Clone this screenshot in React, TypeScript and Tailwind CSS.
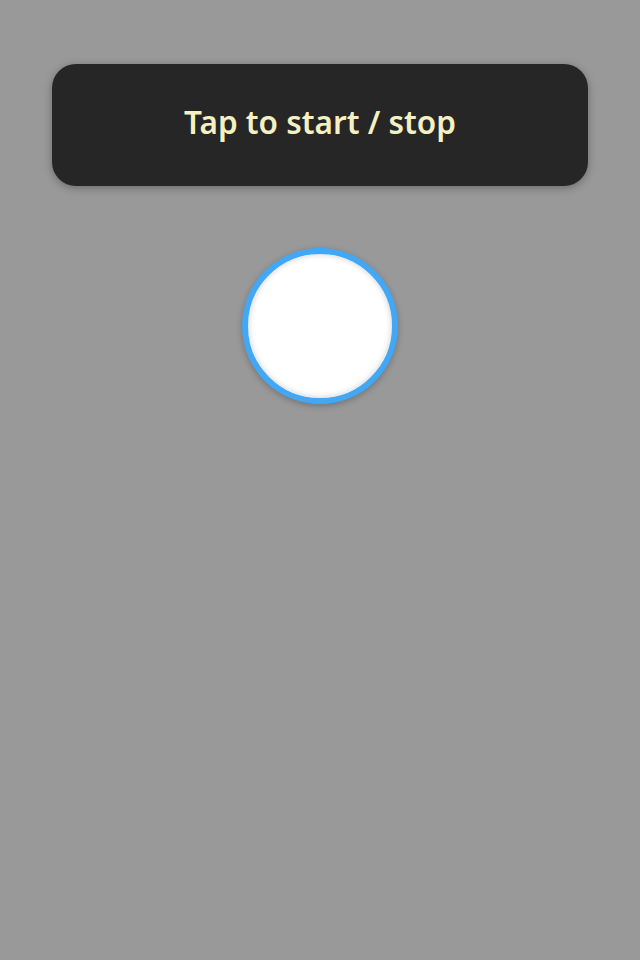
export default function App() {
  return (
    <div className="min-h-screen w-full bg-[#999999] flex flex-col items-center pt-16" style={{ fontFamily: '"Noto Sans", "Open Sans", sans-serif' }}>
      <div className="w-[536px] h-[122px] rounded-[24px] bg-[#262626] flex items-center justify-center pb-[6px] shadow-[0_2px_8px_rgba(0,0,0,0.3)]">
        <span className="text-[31.5px] font-semibold text-[#f5f0c2] leading-none">Tap to start / stop</span>
      </div>
      <div className="mt-[62px] w-[156px] h-[156px] rounded-full bg-white border-[6px] border-[#42a8f5] shadow-[inset_0_0_6px_rgba(0,0,0,0.2),0_2px_6px_rgba(0,0,0,0.25)]" />
    </div>
  );
}
